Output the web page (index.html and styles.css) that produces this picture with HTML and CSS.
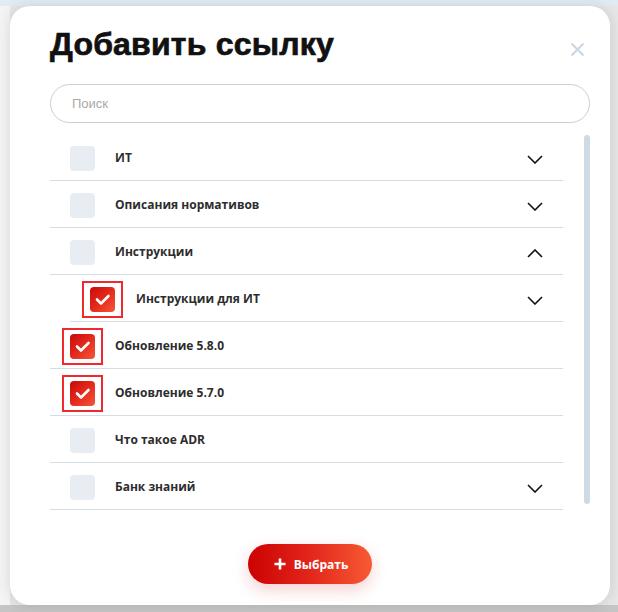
FILE: index.html
```html
<!DOCTYPE html>
<html lang="ru">
<head>
<meta charset="utf-8">
<title>Добавить ссылку</title>
<link rel="stylesheet" href="styles.css">
</head>
<body>
<div class="backdrop">
  <div class="modal">
    <div class="modal-head">
      <h1 class="title">Добавить ссылку</h1>
      <button class="close" aria-label="Закрыть">
        <svg width="15" height="15" viewBox="0 0 15 15"><path d="M1.5 1.5 L13.5 13.5 M13.5 1.5 L1.5 13.5" stroke="#c9d6e3" stroke-width="2" fill="none"/></svg>
      </button>
    </div>
    <div class="search"><span class="placeholder">Поиск</span></div>
    <div class="list-wrap">
      <ul class="list">
        <li class="row"><span class="box"></span><span class="label">ИТ</span>
          <svg class="chev" width="16" height="9" viewBox="0 0 16 9"><path d="M1 1 L8 8 L15 1" stroke="#111" stroke-width="1.6" fill="none"/></svg></li>
        <li class="row"><span class="box"></span><span class="label">Описания нормативов</span>
          <svg class="chev" width="16" height="9" viewBox="0 0 16 9"><path d="M1 1 L8 8 L15 1" stroke="#111" stroke-width="1.6" fill="none"/></svg></li>
        <li class="row"><span class="box"></span><span class="label">Инструкции</span>
          <svg class="chev" width="16" height="9" viewBox="0 0 16 9"><path d="M1 8 L8 1 L15 8" stroke="#111" stroke-width="1.6" fill="none"/></svg></li>
        <li class="row nested"><span class="box checked marked"><svg width="25" height="25" viewBox="0 0 25 25"><path d="M7 12.5 L11 16.5 L18.5 9" stroke="#fff" stroke-width="2.6" fill="none" stroke-linecap="round" stroke-linejoin="round"/></svg></span><span class="label">Инструкции для ИТ</span>
          <svg class="chev" width="16" height="9" viewBox="0 0 16 9"><path d="M1 1 L8 8 L15 1" stroke="#111" stroke-width="1.6" fill="none"/></svg></li>
        <li class="row"><span class="box checked marked"><svg width="25" height="25" viewBox="0 0 25 25"><path d="M7 12.5 L11 16.5 L18.5 9" stroke="#fff" stroke-width="2.6" fill="none" stroke-linecap="round" stroke-linejoin="round"/></svg></span><span class="label">Обновление 5.8.0</span></li>
        <li class="row"><span class="box checked marked"><svg width="25" height="25" viewBox="0 0 25 25"><path d="M7 12.5 L11 16.5 L18.5 9" stroke="#fff" stroke-width="2.6" fill="none" stroke-linecap="round" stroke-linejoin="round"/></svg></span><span class="label">Обновление 5.7.0</span></li>
        <li class="row"><span class="box"></span><span class="label">Что такое ADR</span></li>
        <li class="row"><span class="box"></span><span class="label">Банк знаний</span>
          <svg class="chev" width="16" height="9" viewBox="0 0 16 9"><path d="M1 1 L8 8 L15 1" stroke="#111" stroke-width="1.6" fill="none"/></svg></li>
      </ul>
      <div class="scrollbar"></div>
    </div>
    <div class="actions">
      <button class="btn">
        <svg width="12" height="12" viewBox="0 0 12 12"><path d="M6 0.5 V11.5 M0.5 6 H11.5" stroke="#fff" stroke-width="2.6" fill="none"/></svg>
        <span>Выбрать</span>
      </button>
    </div>
  </div>
</div>
</body>
</html>
```
FILE: styles.css
```css
* { box-sizing: border-box; }
html, body { margin: 0; padding: 0; }
body {
  width: 618px;
  height: 612px;
  overflow: hidden;
  background:
    linear-gradient(to bottom, #e2ebf3 0 6px, transparent 6px),
    linear-gradient(to top, #c5c5c5 0 7px, transparent 7px),
    linear-gradient(to right, #f4f4f4 0 10px, transparent 10px),
    #e6e6e6;
}
.backdrop {
  padding: 6px 8px 7px 10px;
}
.modal {
  width: 600px;
  height: 599px;
  background: #fff;
  border-radius: 20px;
  box-shadow: 0 0 14px rgba(0,0,0,0.12);
  padding: 22px 20px 0 40px;
  display: flex;
  flex-direction: column;
}
.modal-head {
  display: flex;
  justify-content: space-between;
  align-items: flex-start;
}
.title {
  margin: 0;
  font-family: "Liberation Sans", Arial, sans-serif;
  font-weight: 700;
  font-size: 32px;
  line-height: 32px;
  color: #111;
  -webkit-text-stroke: 0.7px #111;
  letter-spacing: 0.2px;
}
.close {
  border: 0;
  background: none;
  padding: 0;
  margin: 14px 5px 0 0;
  width: 15px;
  height: 15px;
  display: block;
}
.close svg { display: block; }
.search {
  margin-top: 24px;
  height: 39px;
  border: 1px solid #cfcfcf;
  border-radius: 20px;
  display: flex;
  align-items: center;
  padding-left: 21px;
}
.placeholder {
  font-family: "Liberation Sans", Arial, sans-serif;
  font-size: 13px;
  color: #a9a9a9;
}
.list-wrap {
  margin-top: 11px;
  display: flex;
  gap: 21px;
}
.list {
  list-style: none;
  margin: 0;
  padding: 0;
  width: 513px;
}
.row {
  height: 47px;
  border-bottom: 1px solid #d3dde6;
  display: flex;
  align-items: center;
  padding: 3px 20px 0 20px;
  position: relative;
}
.row.nested {
  margin-left: 20px;
}
.box {
  width: 25px;
  height: 25px;
  border-radius: 4px;
  background: #e8edf3;
  flex: none;
  position: relative;
}
.box svg { display: block; }
.box.checked {
  background: linear-gradient(135deg, #c70a0a 0%, #e42a1c 50%, #f4573a 100%);
}
.box.marked::after {
  content: "";
  position: absolute;
  top: -6px;
  bottom: -6px;
  left: -8px;
  right: -8px;
  border: 2px solid #ee2a2f;
}
.label {
  margin-left: 20px;
  margin-bottom: 3px;
  font-family: "Open Sans", sans-serif;
  font-weight: 700;
  font-size: 12px;
  color: #2d2d2d;
  flex: 1;
}
.nested .label { margin-left: 21px; }
.chev {
  display: block;
  flex: none;
  margin-top: 2px;
}
.scrollbar {
  width: 6px;
  height: 369px;
  margin-top: 1px;
  border-radius: 3px;
  background: #cfdae5;
}
.actions {
  margin-top: 34px;
  display: flex;
  justify-content: center;
  padding-right: 20px;
}
.btn {
  width: 124px;
  height: 40px;
  border: 0;
  border-radius: 20px;
  background: linear-gradient(to right, #cc0202 0%, #e2261b 50%, #f85a33 100%);
  box-shadow: 0 6px 16px rgba(220, 40, 40, 0.22);
  display: flex;
  align-items: center;
  justify-content: center;
  gap: 8px;
  padding: 0 0 0 2px;
  color: #fff;
  font-family: "Open Sans", sans-serif;
  font-weight: 700;
  font-size: 12px;
}
.btn svg { display: block; }
```
